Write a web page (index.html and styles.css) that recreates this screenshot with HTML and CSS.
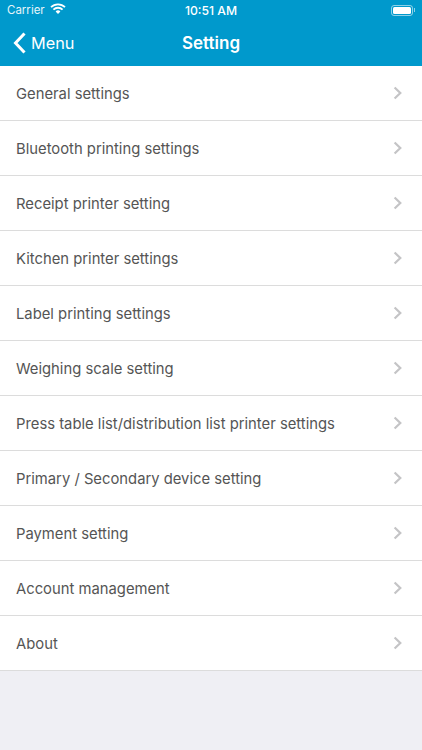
FILE: index.html
```html
<!DOCTYPE html>
<html lang="en">
<head>
<meta charset="utf-8">
<title>Setting</title>
<link rel="stylesheet" href="styles.css">
</head>
<body>
<header class="top">
  <div class="status">
    <div class="status-left">
      <span class="carrier">Carrier</span>
      <svg class="wifi" width="16" height="12" viewBox="0 0 16 12"><path d="M1 4.2a10 10 0 0 1 14 0M3.4 6.6a6.6 6.6 0 0 1 9.2 0" fill="none" stroke="#fff" stroke-width="1.8"/><path d="M5.6 8.4a3.4 3.4 0 0 1 4.8 0L8 11z" fill="#fff"/></svg>
    </div>
    <span class="time">10:51 AM</span>
    <div class="battery"><span class="battery-body"><span class="battery-fill"></span></span><span class="battery-cap"></span></div>
  </div>
  <nav class="nav">
    <div class="back">
      <svg width="14" height="22" viewBox="0 0 14 22"><path d="M11.5 1.5 2.5 11l9 9.5" fill="none" stroke="#fff" stroke-width="3"/></svg>
      <span>Menu</span>
    </div>
    <h1 class="title">Setting</h1>
  </nav>
</header>
<ul class="list">
  <li class="row"><span class="label">General settings</span><svg class="chev" width="10" height="14" viewBox="0 0 10 14"><path d="M1.6 1.5 7.3 7 1.6 12.5" fill="none" stroke="#c4c4c6" stroke-width="2.2"/></svg></li>
  <li class="row"><span class="label">Bluetooth printing settings</span><svg class="chev" width="10" height="14" viewBox="0 0 10 14"><path d="M1.6 1.5 7.3 7 1.6 12.5" fill="none" stroke="#c4c4c6" stroke-width="2.2"/></svg></li>
  <li class="row"><span class="label">Receipt printer setting</span><svg class="chev" width="10" height="14" viewBox="0 0 10 14"><path d="M1.6 1.5 7.3 7 1.6 12.5" fill="none" stroke="#c4c4c6" stroke-width="2.2"/></svg></li>
  <li class="row"><span class="label">Kitchen printer settings</span><svg class="chev" width="10" height="14" viewBox="0 0 10 14"><path d="M1.6 1.5 7.3 7 1.6 12.5" fill="none" stroke="#c4c4c6" stroke-width="2.2"/></svg></li>
  <li class="row"><span class="label">Label printing settings</span><svg class="chev" width="10" height="14" viewBox="0 0 10 14"><path d="M1.6 1.5 7.3 7 1.6 12.5" fill="none" stroke="#c4c4c6" stroke-width="2.2"/></svg></li>
  <li class="row"><span class="label">Weighing scale setting</span><svg class="chev" width="10" height="14" viewBox="0 0 10 14"><path d="M1.6 1.5 7.3 7 1.6 12.5" fill="none" stroke="#c4c4c6" stroke-width="2.2"/></svg></li>
  <li class="row"><span class="label">Press table list/distribution list printer settings</span><svg class="chev" width="10" height="14" viewBox="0 0 10 14"><path d="M1.6 1.5 7.3 7 1.6 12.5" fill="none" stroke="#c4c4c6" stroke-width="2.2"/></svg></li>
  <li class="row"><span class="label">Primary / Secondary device setting</span><svg class="chev" width="10" height="14" viewBox="0 0 10 14"><path d="M1.6 1.5 7.3 7 1.6 12.5" fill="none" stroke="#c4c4c6" stroke-width="2.2"/></svg></li>
  <li class="row"><span class="label">Payment setting</span><svg class="chev" width="10" height="14" viewBox="0 0 10 14"><path d="M1.6 1.5 7.3 7 1.6 12.5" fill="none" stroke="#c4c4c6" stroke-width="2.2"/></svg></li>
  <li class="row"><span class="label">Account management</span><svg class="chev" width="10" height="14" viewBox="0 0 10 14"><path d="M1.6 1.5 7.3 7 1.6 12.5" fill="none" stroke="#c4c4c6" stroke-width="2.2"/></svg></li>
  <li class="row"><span class="label">About</span><svg class="chev" width="10" height="14" viewBox="0 0 10 14"><path d="M1.6 1.5 7.3 7 1.6 12.5" fill="none" stroke="#c4c4c6" stroke-width="2.2"/></svg></li>
</ul>
</body>
</html>
```
FILE: styles.css
```css
* { box-sizing: border-box; }
html, body { margin: 0; padding: 0; height: 100%; }
body {
  background: #efeff4;
  font-family: Inter, "Liberation Sans", sans-serif;
  overflow: hidden;
}
.top { background: #0099cc; color: #fff; height: 66px; }
.status {
  height: 20px;
  display: grid;
  grid-template-columns: 1fr auto 1fr;
  align-items: center;
  padding: 0 7px 0 7px;
  font-size: 11.5px;
}
.status-left { display: flex; align-items: center; gap: 5px; }
.carrier { opacity: .9; }
.wifi { margin-top: -3px; }
.time { font-weight: 500; font-size: 12.2px; }
.battery { display: flex; align-items: center; justify-content: flex-end; }
.battery-body {
  width: 22px; height: 11px;
  border: 1px solid rgba(255,255,255,.55);
  border-radius: 3px;
  padding: 1px;
  display: flex;
}
.battery-fill { flex: 1; background: #fff; border-radius: 1.5px; }
.battery-cap { width: 1px; height: 4px; margin-left: 1px; background: rgba(255,255,255,.55); }
.nav {
  height: 46px;
  display: grid;
  grid-template-columns: 1fr auto 1fr;
  align-items: center;
  padding: 0 13px;
}
.back { display: flex; align-items: center; gap: 4px; font-size: 16.3px; }
.title { grid-column: 2; margin: 0; font-size: 17px; font-weight: 600; }
.list { list-style: none; margin: 0; padding: 0; background: #fff; }
.row {
  height: 55px;
  display: flex;
  align-items: center;
  justify-content: space-between;
  padding: 0 19px 0 16px;
  border-bottom: 1px solid #dcdcdc;
  color: #555;
  font-size: 14.8px;
}
.label { padding-top: 2px; }
```
